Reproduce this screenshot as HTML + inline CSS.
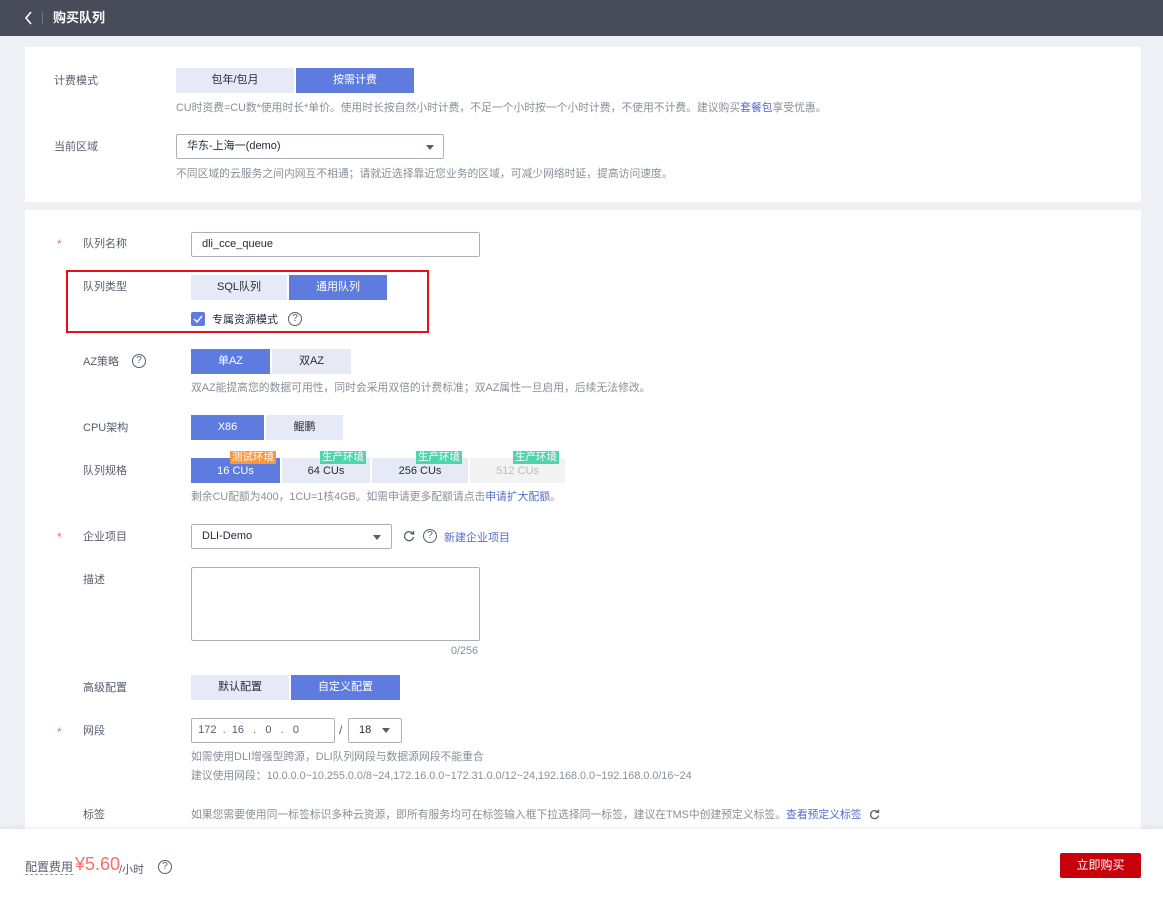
<!DOCTYPE html>
<html><head><meta charset="utf-8"><style>
*{margin:0;padding:0;box-sizing:border-box}
body{width:1163px;height:900px;overflow:hidden;background:#eff0f5;font-family:"Liberation Sans","Noto Sans CJK SC",sans-serif;font-size:12px;color:#252b3a;position:relative}
.a{position:absolute}
.lbl{position:absolute;font-size:11px;color:#575d6c;line-height:14px}
.tip{position:absolute;font-size:10.8px;color:#8a8e99;line-height:14px;white-space:nowrap}
.btn{position:absolute;height:25px;line-height:25px;text-align:center;font-size:11px;background:#e6eaf7;color:#252b3a}
.on{background:#5e7ce0;color:#fff}
.inp{position:absolute;border:1px solid #adb0b8;background:#fff;height:25px;line-height:23px;padding-left:10px;font-size:11px;color:#252b3a;border-radius:2px}
.star{position:absolute;color:#f66f6a;font-size:12px}
.q{position:absolute;width:14px;height:14px;border:1px solid #575d6c;border-radius:50%;font-size:10px;line-height:12px;text-align:center;color:#575d6c}
.tag{position:absolute;height:13px;line-height:13px;font-size:10.5px;color:#fff;padding:0 2px;overflow:hidden}
.caret{position:absolute;width:0;height:0;border-left:4px solid transparent;border-right:4px solid transparent;border-top:5px solid #575d6c}
a{color:#526ecc;text-decoration:none}
</style></head><body>
<div class="a" style="left:0;top:0;width:1163px;height:36px;background:#484c5a"></div>
<svg class="a" style="left:24px;top:11px" width="10" height="14"><path d="M7 1 L2 7 L7 13" stroke="#fff" stroke-width="1.6" fill="none"/></svg>
<div class="a" style="left:42px;top:12px;width:1px;height:12px;background:#777"></div>
<div class="a" style="left:53px;top:9px;color:#fff;font-size:13px;font-weight:bold;line-height:18px">购买队列</div>

<div class="a" style="left:25px;top:47px;width:1116px;height:155px;background:#fff"></div>
<div class="lbl" style="left:54px;top:74px">计费模式</div>
<div class="btn" style="left:176px;top:68px;width:118px">包年/包月</div>
<div class="btn on" style="left:296px;top:68px;width:118px">按需计费</div>
<div class="tip" style="left:176px;top:101px">CU时资费=CU数*使用时长*单价。使用时长按自然小时计费，不足一个小时按一个小时计费，不使用不计费。建议购买<a>套餐包</a>享受优惠。</div>
<div class="lbl" style="left:54px;top:140px">当前区域</div>
<div class="inp" style="left:176px;top:134px;width:268px">华东-上海一(demo)</div>
<div class="caret" style="left:426px;top:145px"></div>
<div class="tip" style="left:176px;top:167px">不同区域的云服务之间内网互不相通；请就近选择靠近您业务的区域，可减少网络时延，提高访问速度。</div>

<div class="a" style="left:25px;top:210px;width:1116px;height:630px;background:#fff"></div>
<div class="star" style="left:57px;top:237px">*</div>
<div class="lbl" style="left:83px;top:237px">队列名称</div>
<div class="inp" style="left:191px;top:232px;width:289px">dli_cce_queue</div>
<div class="a" style="left:66px;top:270px;width:363px;height:63px;border:2px solid #e5101b"></div>
<div class="lbl" style="left:83px;top:280px">队列类型</div>
<div class="btn" style="left:191px;top:275px;width:96px">SQL队列</div>
<div class="btn on" style="left:289px;top:275px;width:98px">通用队列</div>
<div class="a" style="left:191px;top:312px;width:14px;height:14px;background:#5e7ce0;border-radius:2px"><svg width="14" height="14"><path d="M3 7 L6 10 L11 4" stroke="#fff" stroke-width="1.4" fill="none"/></svg></div>
<div class="lbl" style="left:212px;top:313px;color:#252b3a">专属资源模式</div>
<div class="q" style="left:288px;top:312px">?</div>

<div class="lbl" style="left:83px;top:355px">AZ策略</div>
<div class="q" style="left:132px;top:354px">?</div>
<div class="btn on" style="left:191px;top:349px;width:79px">单AZ</div>
<div class="btn" style="left:272px;top:349px;width:79px">双AZ</div>
<div class="tip" style="left:191px;top:381px">双AZ能提高您的数据可用性，同时会采用双倍的计费标准；双AZ属性一旦启用，后续无法修改。</div>

<div class="lbl" style="left:83px;top:421px">CPU架构</div>
<div class="btn on" style="left:191px;top:415px;width:73px">X86</div>
<div class="btn" style="left:266px;top:415px;width:77px">鲲鹏</div>

<div class="lbl" style="left:83px;top:464px">队列规格</div>
<div class="btn on" style="left:191px;top:458px;width:89px;line-height:26px">16 CUs</div>
<div class="btn" style="left:282px;top:458px;width:88px;line-height:26px">64 CUs</div>
<div class="btn" style="left:372px;top:458px;width:96px;line-height:26px">256 CUs</div>
<div class="btn" style="left:470px;top:458px;width:95px;background:#f3f3f3;color:#bbb;line-height:26px">512 CUs</div>
<div class="tag" style="left:230px;top:451px;background:#fa9841">测试环境</div>
<div class="tag" style="left:320px;top:451px;background:#50d4ab">生产环境</div>
<div class="tag" style="left:416px;top:451px;background:#50d4ab">生产环境</div>
<div class="tag" style="left:513px;top:451px;background:#50d4ab">生产环境</div>
<div class="tip" style="left:191px;top:490px">剩余CU配额为400，1CU=1核4GB。如需申请更多配额请点击<a>申请扩大配额</a>。</div>

<div class="star" style="left:57px;top:530px">*</div>
<div class="lbl" style="left:83px;top:530px">企业项目</div>
<div class="inp" style="left:191px;top:524px;width:201px">DLI-Demo</div>
<div class="caret" style="left:373px;top:535px"></div>
<svg class="a" style="left:402px;top:529px" width="14" height="14"><path d="M11 5 A4.5 4.5 0 1 0 11.5 8" stroke="#575d6c" stroke-width="1.3" fill="none"/><path d="M8.5 4.5 L11.5 5 L11.5 2" stroke="#575d6c" stroke-width="1.3" fill="none"/></svg>
<div class="q" style="left:423px;top:529px">?</div>
<div class="a" style="left:444px;top:529px;font-size:11px;color:#526ecc">新建企业项目</div>

<div class="lbl" style="left:83px;top:573px">描述</div>
<div class="a" style="left:191px;top:567px;width:289px;height:74px;border:1px solid #adb0b8;border-radius:2px"></div>
<div class="tip" style="left:451px;top:644px">0/256</div>

<div class="lbl" style="left:83px;top:681px">高级配置</div>
<div class="btn" style="left:191px;top:675px;width:98px">默认配置</div>
<div class="btn on" style="left:291px;top:675px;width:109px">自定义配置</div>

<div class="star" style="left:57px;top:725px">*</div>
<div class="lbl" style="left:83px;top:724px">网段</div>
<div class="inp" style="left:191px;top:718px;width:144px;color:#575d6c;padding-left:0">&nbsp;&nbsp;172&nbsp;&nbsp;.&nbsp;&nbsp;16&nbsp;&nbsp;&nbsp;.&nbsp;&nbsp;&nbsp;0&nbsp;&nbsp;&nbsp;.&nbsp;&nbsp;&nbsp;0</div>
<div class="a" style="left:339px;top:723px;color:#575d6c">/</div>
<div class="inp" style="left:348px;top:718px;width:54px">18</div>
<div class="caret" style="left:382px;top:728px"></div>
<div class="tip" style="left:191px;top:750px">如需使用DLI增强型跨源，DLI队列网段与数据源网段不能重合</div>
<div class="tip" style="left:191px;top:769px">建议使用网段：10.0.0.0~10.255.0.0/8~24,172.16.0.0~172.31.0.0/12~24,192.168.0.0~192.168.0.0/16~24</div>
<div class="lbl" style="left:83px;top:808px">标签</div>
<div class="tip" style="left:191px;top:808px">如果您需要使用同一标签标识多种云资源，即所有服务均可在标签输入框下拉选择同一标签，建议在TMS中创建预定义标签。<a>查看预定义标签</a></div>
<svg class="a" style="left:868px;top:808px" width="13" height="13"><path d="M10 4.5 A4 4 0 1 0 10.5 7.5" stroke="#575d6c" stroke-width="1.3" fill="none"/><path d="M7.5 4 L10.5 4.5 L10.5 1.5" stroke="#575d6c" stroke-width="1.3" fill="none"/></svg>

<div class="a" style="left:0;top:829px;width:1163px;height:71px;background:#fff;box-shadow:0 -2px 4px rgba(0,0,0,.06)"></div>
<div class="a" style="left:25px;top:860px;font-size:12px;color:#575d6c;border-bottom:1px dashed #999;line-height:14px">配置费用</div>
<div class="a" style="left:75px;top:854px;font-size:18px;color:#f66f6a;line-height:20px">¥5.60</div>
<div class="a" style="left:119px;top:861px;font-size:11px;color:#575d6c">/小时</div>
<div class="q" style="left:158px;top:860px">?</div>
<div class="a" style="left:1060px;top:853px;width:81px;height:25px;background:#c7000b;color:#fff;font-size:12px;line-height:25px;text-align:center;border-radius:2px">立即购买</div>
</body></html>
